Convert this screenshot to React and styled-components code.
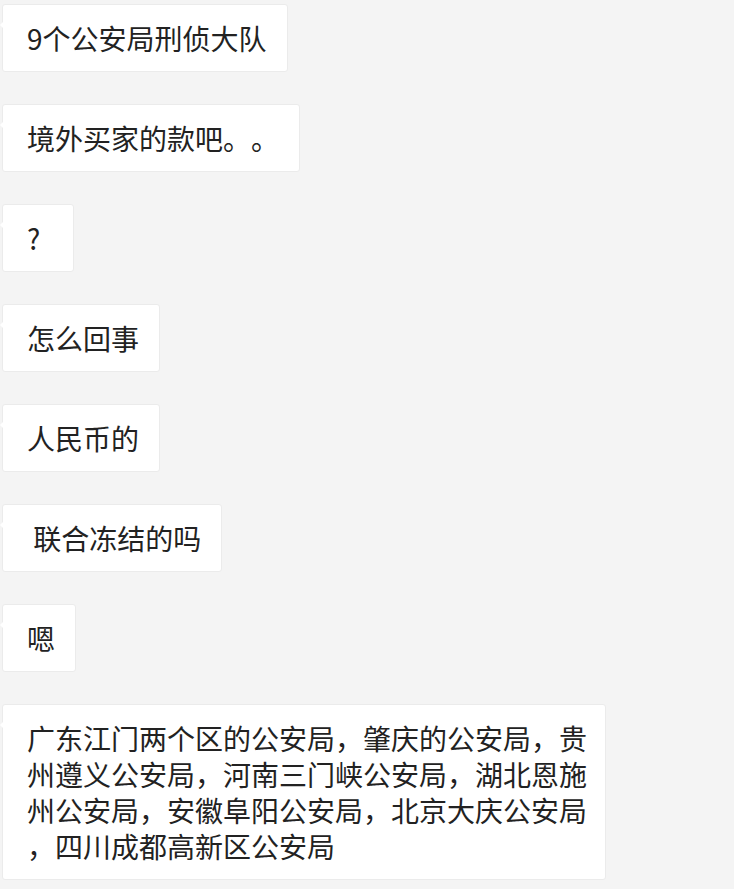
import React from "react";
import styled, { createGlobalStyle } from "styled-components";

const Global = createGlobalStyle`
  html, body { margin: 0; padding: 0; background: #f4f4f4; }
  body { font-family: "Noto Sans CJK SC", "Noto Sans", sans-serif; }
`;

const Page = styled.div`
  display: flex;
  flex-direction: column;
  align-items: flex-start;
  gap: 32px;
  padding: 4px 0 0 2px;
  min-height: 889px;
  box-sizing: border-box;
  background: #f4f4f4;
`;

const Bubble = styled.div`
  position: relative;
  box-sizing: border-box;
  min-width: 72px;
  max-width: 604px;
  padding: 15px 20px 15px 24px;
  background: #ffffff;
  border: 1px solid #ebebeb;
  border-radius: 3px;
  color: #222222;
  font-size: 28px;
  line-height: 36px;
  white-space: pre;
  text-spacing-trim: space-all;

  &::before {
    content: "";
    position: absolute;
    left: -3px;
    top: 17px;
    border-top: 3px solid transparent;
    border-bottom: 3px solid transparent;
    border-right: 3px solid #ffffff;
  }
`;

const Line = styled.span`
  display: block;
`;

const messages = [
  ["9个公安局刑侦大队"],
  ["境外买家的款吧。。"],
  ["?"],
  ["怎么回事"],
  ["人民币的"],
  [" 联合冻结的吗"],
  ["嗯"],
  [
    "广东江门两个区的公安局，肇庆的公安局，贵",
    "州遵义公安局，河南三门峡公安局，湖北恩施",
    "州公安局，安徽阜阳公安局，北京大庆公安局",
    "，四川成都高新区公安局",
  ],
];

export default function App() {
  return (
    <>
      <Global />
      <Page>
        {messages.map((lines, i) => (
          <Bubble key={i}>
            {lines.map((l, j) => (
              <Line key={j}>{l}</Line>
            ))}
          </Bubble>
        ))}
      </Page>
    </>
  );
}
